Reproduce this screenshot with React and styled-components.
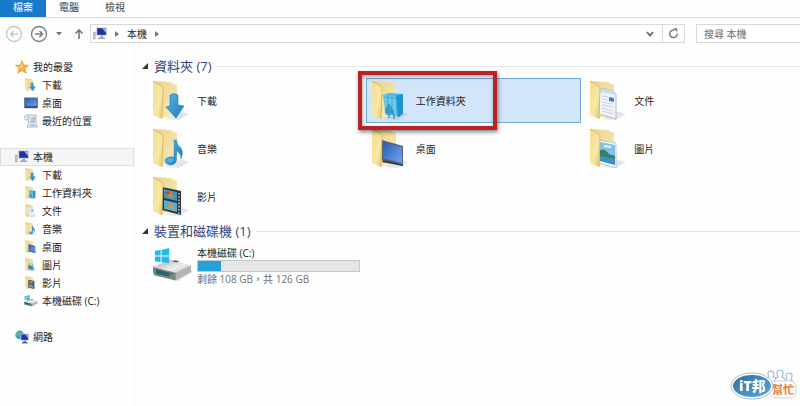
import React, { useState } from "react";
import styled, { createGlobalStyle } from "styled-components";

const places = [
  { id: "downloads", name: "下載" },
  { id: "work", name: "工作資料夾" },
  { id: "documents", name: "文件" },
  { id: "music", name: "音樂" },
  { id: "desktop", name: "桌面" },
  { id: "pictures", name: "圖片" },
  { id: "videos", name: "影片" },
];

function FolderContent({ kind }) {
  switch (kind) {
    case "downloads":
      return (
        <path
          d="M17 15 Q21 12 25 15 V25 L31 26 L23 38 L13 27 L17 26 Z"
          fill="url(#blueGlass)"
          stroke="#1a78b8"
          strokeWidth="0.6"
        />
      );
    case "work":
      return (
        <g>
          <path d="M11 15 L17 13 L31 14 L29 36 L14 35 Z" fill="#43b8e6" />
          <path d="M24 16 L31 14 V34 L26 37 Z" fill="#1e95cf" />
          <path d="M12 15 L24 16 V35 L13 33 Z" fill="#6cc9ec" />
          <path d="M13 29 L17 23 L22 31 V34 L13 33 Z" fill="#3a9cc9" />
          <path
            d="M12 17 L24 18 M16 16 V32 M20 16 V34 M27 16 V36 M29 16 V33 M24 22 L31 20 M24 28 L31 26"
            stroke="#2393c8"
            strokeWidth="0.6"
          />
          <path d="M17 33 V38 M22 34 V39 M27 35 V37" stroke="#1786bd" strokeWidth="1.1" />
        </g>
      );
    case "documents":
      return (
        <g>
          <path d="M9 8 L21 10 L26 14 V39 L9 34 Z" fill="#eef2fa" stroke="#9aa7b8" strokeWidth="0.7" />
          <path d="M9 8 L21 10 L26 15 L10 12 Z" fill="#c9daf1" />
          <path
            d="M12 16 L18 17 M12 19 L18 20 M12 22 L23 24 M12 25 L23 27 M12 28 L23 31 M12 31 L23 34"
            stroke="#c0c9da"
            strokeWidth="0.8"
          />
          <path d="M19 17 L24 18 V22 L19 21 Z" fill="#3f88b5" />
        </g>
      );
    case "music":
      return (
        <g>
          <path
            d="M21 12 H23.5 Q24 17 28 20 Q31 25 28 31 Q28 25 23.5 23 V32 Q23 37 17 37 Q12 36 12 32 Q14 28 21 29 Z"
            fill="url(#blueGlass)"
            stroke="#2a80b9"
            strokeWidth="0.4"
          />
          <ellipse cx="17" cy="32" rx="3.5" ry="2" fill="#64bced" opacity="0.6" />
        </g>
      );
    case "desktop":
      return (
        <g>
          <path d="M10 12 L31 18 V38 L10 32 Z" fill="#566474" />
          <path d="M11 14 L30 19 V35 L11 30 Z" fill="url(#screen)" />
          <path d="M11 32 L31 37 V38 L10 34 Z" fill="#253448" />
        </g>
      );
    case "pictures":
      return (
        <g>
          <path d="M9 12 L26 15 V40 L9 35 Z" fill="#f4f8fb" stroke="#a8b2bb" strokeWidth="0.7" />
          <path d="M10 14 L25 17 V37 L10 33 Z" fill="#82c0e8" />
          <path d="M10 22 Q15 20 19 26 L25 28 V31 L10 30 Z" fill="#387f66" />
          <path d="M10 28 L25 31 V37 L10 33 Z" fill="#3d90c4" />
          <path d="M14 18 L21 19" stroke="#e5f5fb" strokeWidth="2" />
        </g>
      );
    default:
      return (
        <g>
          <path d="M9 11 L28 15 V39 L9 34 Z" fill="#303234" />
          <path d="M11 13 L24 16 V25 L11 22 Z" fill="#3f97bf" />
          <path d="M11 24 L24 27 V36 L11 33 Z" fill="#5cacd1" />
          <path d="M14 19 L18 15 L21 22 L17 22 Z" fill="#d1813d" />
          <path d="M14 30 L19 27 L22 34 L17 32 Z" fill="#c99954" />
          <path d="M12 17 H17" stroke="#b34b48" strokeWidth="2" />
          <path d="M26 17 V38" stroke="#e8e8e8" strokeWidth="1.3" strokeDasharray="1.6 1.6" />
        </g>
      );
  }
}

function FolderIcon({ kind }) {
  return (
    <svg viewBox="0 0 36 42" aria-hidden="true">
      <path d="M12 39 L26 31 L36 34 L26 40 Z" fill="#8c929a" opacity="0.22" />
      <path d="M0 1 L17 2 L24 5 V35 L8 38 Z" fill="url(#folderBack)" />
      <FolderContent kind={kind} />
      <path d="M0 1 L10 7 L9 39 L0 35 Z" fill="url(#folderFront)" />
      <path d="M0 1 L10 7 L9 39" fill="none" stroke="#cfae57" strokeWidth="0.7" />
    </svg>
  );
}

function ComputerIcon() {
  return (
    <svg viewBox="0 0 14 14" aria-hidden="true">
      <path d="M0.5 5 H2.3 V12 H0.5 Z" fill="#c3c8d0" stroke="#7e8793" strokeWidth="0.4" />
      <path d="M3.4 0.5 H13.8 V8.6 H3.4 Z" fill="#bcc5dd" />
      <path d="M4.2 1.2 H13 V7.8 H4.2 Z" fill="#2032a0" />
      <path d="M9 1.2 H13 V6 Z" fill="#8fb8ee" />
      <path d="M7.5 8.6 H10 V10.6 H12 V12 H5 V10.6 H7.5 Z" fill="#9da6b8" />
    </svg>
  );
}

function StarIcon() {
  return (
    <svg viewBox="0 0 14 14" aria-hidden="true">
      <path
        d="M7 0.6 L8.8 5 L13.5 5.3 L9.9 8.4 L11.2 13.2 L7 10.6 L2.8 13.2 L4.1 8.4 L0.5 5.3 L5.2 5 Z"
        fill="#fbb03f"
        stroke="#e18a22"
        strokeWidth="0.6"
      />
      <path d="M7 2.5 L8 6 L5 8 L3 6 L6 6 Z" fill="#fedc87" />
    </svg>
  );
}

function ScreenIcon() {
  return (
    <svg viewBox="0 0 14 14" aria-hidden="true">
      <rect x="0.4" y="1.9" width="13.2" height="10" fill="#3c5f90" stroke="#67788e" strokeWidth="0.7" />
      <rect x="1.4" y="2.8" width="11.2" height="7.4" fill="url(#screen)" />
      <path d="M1 11 H13" stroke="#1b3760" />
    </svg>
  );
}

function RecentIcon() {
  return (
    <svg viewBox="0 0 14 14" aria-hidden="true">
      <path d="M4 1 H12 V10 L13.5 13 H3 L4.5 10 Z" fill="#e9eef3" stroke="#91a1b0" strokeWidth="0.7" />
      <path d="M7 4 H11 M7 6 H11 M6 8 H11 M6 11 H11" stroke="#7792ad" strokeWidth="0.9" />
      <circle cx="3" cy="3.4" r="2.6" fill="#f3f3f3" stroke="#9ea7b0" strokeWidth="0.7" />
      <path d="M3 2 V3.6 H4.4" fill="none" stroke="#77818b" strokeWidth="0.6" />
    </svg>
  );
}

function NetworkIcon() {
  return (
    <svg viewBox="0 0 14 14" aria-hidden="true">
      <circle cx="4.7" cy="5" r="4.4" fill="#4b9cc9" />
      <path d="M2 2 Q6 1 5 4 Q3 4 3 6 Q1 7 1 4 Z M6 6 L8 3 V8 Z" fill="#63ba78" />
      <rect x="5.6" y="3.7" width="8.2" height="7" fill="#cbd5ec" />
      <rect x="6.3" y="4.4" width="6.8" height="5.5" fill="#1f38ae" />
      <path d="M10 4.4 H13.1 V8 Z" fill="#85aae9" />
      <path d="M8.5 10.7 H11 V12 H12.5 V13.4 H7 V12 H8.5 Z" fill="#5c6b91" />
    </svg>
  );
}

function DriveIcon() {
  return (
    <svg viewBox="0 0 42 36" aria-hidden="true">
      <path d="M1 26 L26 35 L42 25 L34 20 Z" fill="#9a9a9a" opacity="0.3" />
      <path d="M0 20 L19 12 L40 18 L24 26 Z" fill="url(#metal)" />
      <path d="M0 20 L24 26 V34 L2 29 Q0 28 0 25 Z" fill="#7d858b" />
      <path d="M24 26 L40 18 V25 L24 34 Z" fill="#b2b3b4" />
      <path d="M3 22 L21 27 V31 L3 27 Z" fill="#286273" />
      <path d="M17 27 L22 28 V32 L17 31 Z" fill="#51a64d" />
      <ellipse cx="24" cy="14" rx="3" ry="1" fill="#555b60" />
      <path
        d="M2 3 L8 2 V8 H2 Z M9 2 L17 0 V8 H9 Z M2 9 H8 V15 L2 14 Z M9 9 H17 V16 L9 15 Z"
        fill="#23bce9"
      />
    </svg>
  );
}

function Gradients() {
  return (
    <Defs aria-hidden="true">
      <defs>
        <linearGradient id="folderBack" x2="1" y2="1">
          <stop offset="0" stopColor="#ead28a" />
          <stop offset="1" stopColor="#faedba" />
        </linearGradient>
        <linearGradient id="folderFront" y2="1">
          <stop offset="0" stopColor="#f3dd93" />
          <stop offset="0.6" stopColor="#f8e8a6" />
          <stop offset="1" stopColor="#e5c461" />
        </linearGradient>
        <linearGradient id="blueGlass" y2="1">
          <stop offset="0" stopColor="#5ab9e7" />
          <stop offset="1" stopColor="#1879bd" />
        </linearGradient>
        <linearGradient id="screen" x2="1" y2="1">
          <stop offset="0" stopColor="#285bbb" />
          <stop offset="1" stopColor="#71a6ed" />
        </linearGradient>
        <linearGradient id="metal" x2="1" y2="1">
          <stop offset="0" stopColor="#a4a7aa" />
          <stop offset="0.6" stopColor="#eeeeee" />
          <stop offset="1" stopColor="#b7b8b9" />
        </linearGradient>
        <linearGradient id="badge" y2="1">
          <stop offset="0" stopColor="#2c6da3" />
          <stop offset="1" stopColor="#62a8d5" />
        </linearGradient>
      </defs>
    </Defs>
  );
}

function Toolbar() {
  return (
    <Bar>
      <NavButtons>
        <IconButton aria-label="上一頁">
          <svg width="18" height="18" fill="none" stroke="#c6c6c6">
            <circle cx="9" cy="9" r="7.5" strokeWidth="1.3" />
            <path d="M13 9 H5.5 M8.5 6 L5.5 9 L8.5 12" strokeWidth="1.4" />
          </svg>
        </IconButton>
        <IconButton aria-label="下一頁">
          <svg width="18" height="18" fill="none" stroke="#808080">
            <circle cx="9" cy="9" r="7.5" strokeWidth="1.4" />
            <path d="M5 9 H12.5 M9.5 6 L12.5 9 L9.5 12" strokeWidth="1.7" />
          </svg>
        </IconButton>
        <IconButton aria-label="最近瀏覽">
          <svg width="8" height="4" fill="#777">
            <path d="M1 0 H7 L4 3.5 Z" />
          </svg>
        </IconButton>
        <IconButton aria-label="上移">
          <svg width="18" height="12" fill="none" stroke="#777" strokeWidth="1.6">
            <path d="M9 11 V2 M5.5 5.5 L9 2 L12.5 5.5" />
          </svg>
        </IconButton>
      </NavButtons>
      <Address>
        <SmallIcon>
          <ComputerIcon />
        </SmallIcon>
        <Crumb />
        <a href="#computer">本機</a>
        <Crumb />
        <Chevron aria-label="記錄">
          <svg width="8" height="6" fill="none" stroke="#666" strokeWidth="1.8">
            <path d="M1 1 L4 4.5 L7 1" />
          </svg>
        </Chevron>
        <Refresh aria-label="重新整理">
          <svg width="11" height="11" fill="none" stroke="#777" strokeWidth="1.4">
            <path d="M6.5 2.2 A3.8 3.8 0 1 0 9.3 5.6" />
            <path d="M5.4 0.2 H9.2 V4 Z" fill="#777" stroke="none" />
          </svg>
        </Refresh>
      </Address>
      <Search type="search" placeholder="搜尋 本機" aria-label="搜尋 本機" />
    </Bar>
  );
}

function Crumb() {
  return (
    <svg width="4" height="6" fill="#777" aria-hidden="true">
      <path d="M0 0 L4 3 L0 6 Z" />
    </svg>
  );
}

function Sidebar() {
  return (
    <Side aria-label="導覽窗格">
      <Tree>
        <Node href="#favorites">
          <SmallIcon><StarIcon /></SmallIcon>
          我的最愛
        </Node>
        <Node href="#downloads" $child>
          <SmallIcon><FolderIcon kind="downloads" /></SmallIcon>
          下載
        </Node>
        <Node href="#desktop" $child>
          <SmallIcon><ScreenIcon /></SmallIcon>
          桌面
        </Node>
        <Node href="#recent" $child>
          <SmallIcon><RecentIcon /></SmallIcon>
          最近的位置
        </Node>
      </Tree>
      <Tree>
        <Node href="#computer" $current aria-current="page">
          <SmallIcon><ComputerIcon /></SmallIcon>
          本機
        </Node>
        {places.map((place) => (
          <Node href={`#${place.id}`} key={place.id} $child>
            <SmallIcon><FolderIcon kind={place.id} /></SmallIcon>
            {place.name}
          </Node>
        ))}
        <Node href="#c" $child>
          <SmallIcon><DriveIcon /></SmallIcon>
          本機磁碟 (C:)
        </Node>
      </Tree>
      <Tree>
        <Node href="#network">
          <SmallIcon><NetworkIcon /></SmallIcon>
          網路
        </Node>
      </Tree>
    </Side>
  );
}

function Group({ title, children }) {
  const [open, setOpen] = useState(true);

  return (
    <section>
      <GroupTitle>
        <GroupToggle aria-expanded={open} onClick={() => setOpen(!open)}>
          <svg width="6" height="6" fill="#333" aria-hidden="true">
            <path d="M6 0 V6 H0 Z" />
          </svg>
          {title}
        </GroupToggle>
      </GroupTitle>
      {open && <Tiles>{children}</Tiles>}
    </section>
  );
}

function Watermark() {
  return (
    <Logo viewBox="0 0 70 40" role="img" aria-label="iT邦幫忙">
      <g fill="#fff" stroke="#8dbbdc" strokeWidth="1.1">
        <path d="M37 17 Q38 13 41 12 Q38 6 43 6 Q48 7 45 12 L49 13 M46 17 Q47 13 50 12 Q47 5 52 5 Q57 6 54 12 L57 14 M55 18 Q57 15 59 14 Q56 8 61 8 Q66 9 63 14 Q65 16 64 19" />
      </g>
      <rect x="42" y="16" width="26" height="17" rx="6" fill="#fff" stroke="#d0d0d0" />
      <ellipse cx="24" cy="21" rx="21" ry="13" fill="#fff" stroke="#a8bdcc" />
      <ellipse cx="24" cy="21" rx="19" ry="11" fill="url(#badge)" />
      <LogoText x="11" y="26" fontSize="14" fill="#fff">iT邦</LogoText>
      <LogoText x="44" y="29" fontSize="11" fill="#ec8440">幫忙</LogoText>
    </Logo>
  );
}

function App() {
  const [selected, setSelected] = useState("work");

  return (
    <Window>
      <GlobalStyle />
      <Gradients />
      <Tabs>
        <Tab $active>檔案</Tab>
        <Tab>電腦</Tab>
        <Tab>檢視</Tab>
      </Tabs>
      <Toolbar />
      <Body>
        <Sidebar />
        <Content>
          <Group title="資料夾 (7)">
            {places.map((place) => (
              <Tile
                key={place.id}
                $selected={selected === place.id}
                onClick={() => setSelected(place.id)}
              >
                <TileIcon>
                  <FolderIcon kind={place.id} />
                </TileIcon>
                {place.name}
                {place.id === "work" && <Highlight />}
              </Tile>
            ))}
          </Group>
          <Group title="裝置和磁碟機 (1)">
            <Tile $selected={selected === "c"} onClick={() => setSelected("c")}>
              <TileIcon $wide>
                <DriveIcon />
              </TileIcon>
              <DriveInfo>
                <span>本機磁碟 (C:)</span>
                <Usage value="18" max="126" aria-label="已使用空間" />
                <Free>剩餘 108 GB，共 126 GB</Free>
              </DriveInfo>
            </Tile>
          </Group>
        </Content>
      </Body>
      <Watermark />
    </Window>
  );
}

export default App;

const GlobalStyle = createGlobalStyle`
  * {
    box-sizing: border-box;
  }

  body {
    margin: 0;
    background: #fefefe;
  }

  body, button, input {
    font-family: "Open Sans", "Noto Sans CJK TC", sans-serif;
    font-size: 10px;
    line-height: 14px;
    color: #222;
  }

  button {
    border: 0;
    padding: 0;
    background: none;
  }

  a {
    color: inherit;
    text-decoration: none;
  }
`;

const Window = styled.div`
  min-height: 100vh;
  display: flex;
  flex-direction: column;
`;

const Defs = styled.svg`
  position: absolute;
  width: 0;
  height: 0;
`;

const Tabs = styled.nav`
  display: flex;
  border-bottom: 1px solid #dcdcdc;
`;

const Tab = styled.button`
  width: 46px;
  height: 17px;
  padding-bottom: 3px;
  background: ${(props) => (props.$active ? "#1979ca" : "transparent")};
  color: ${(props) => (props.$active ? "#fff" : "#444")};
`;

const Bar = styled.header`
  display: flex;
  align-items: center;
  padding-top: 6px;
`;

const NavButtons = styled.div`
  width: 90px;
  padding-left: 5px;
  display: flex;
  align-items: center;
  gap: 7px;
`;

const IconButton = styled.button`
  display: flex;
`;

const Address = styled.div`
  flex: 1;
  height: 19px;
  display: flex;
  align-items: center;
  gap: 8px;
  padding-left: 2px;
  border: 1px solid #d9d9d9;
`;

const SmallIcon = styled.span`
  flex: none;
  width: 14px;
  height: 14px;

  svg {
    display: block;
    width: 14px;
    height: 14px;
  }
`;

const Chevron = styled(IconButton)`
  margin-left: auto;
`;

const Refresh = styled.button`
  width: 22px;
  height: 100%;
  display: flex;
  align-items: center;
  justify-content: center;
  border-left: 1px solid #d9d9d9;
`;

const Search = styled.input`
  width: 13%;
  height: 19px;
  margin-left: 11px;
  padding: 0 7px;
  border: 1px solid #d9d9d9;
  border-right: 0;
  border-radius: 0;
  background: #fff;

  &::placeholder {
    color: #6d6d6d;
    opacity: 1;
  }
`;

const Body = styled.div`
  flex: 1;
  display: flex;
  padding-top: 6px;
`;

const Side = styled.nav`
  width: 135px;
  padding-top: 9px;
  display: flex;
  flex-direction: column;
  gap: 18px;
  border-right: 1px solid #f7f7f7;
`;

const Tree = styled.div`
  display: flex;
  flex-direction: column;
`;

const Node = styled.a`
  height: 18px;
  display: flex;
  align-items: center;
  gap: 4px;
  padding-left: ${(props) => (props.$child ? "24px" : "15px")};
  background: ${(props) => (props.$current ? "#f5f5f5" : "transparent")};
  box-shadow: ${(props) => (props.$current ? "inset 0 0 0 1px #dedede" : "none")};
`;

const Content = styled.main`
  flex: 1;
  min-width: 0;
  padding: 8px 0 0 7px;
`;

const GroupTitle = styled.h2`
  display: flex;
  align-items: center;
  gap: 6px;
  margin: 0 0 3px;
  font-weight: normal;

  &::after {
    content: "";
    flex: 1;
    border-top: 1px solid #e4e4e4;
  }
`;

const GroupToggle = styled.button`
  display: flex;
  align-items: center;
  gap: 6px;
  font-size: 13px;
  line-height: 18px;
  color: #34427f;
`;

const Tiles = styled.div`
  display: grid;
  grid-template-columns: repeat(auto-fill, minmax(200px, 1fr));
  gap: 3px;
  padding: 0 0 3px 5px;
`;

const Tile = styled.button`
  position: relative;
  height: 45px;
  display: flex;
  align-items: center;
  padding-left: 5px;
  text-align: left;
  border: 1px solid ${(props) => (props.$selected ? "#74a9dc" : "transparent")};
  background: ${(props) => (props.$selected ? "#d1e5fb" : "transparent")};
`;

const TileIcon = styled.span`
  flex: none;
  width: 44px;

  svg {
    display: block;
    width: ${(props) => (props.$wide ? "40px" : "36px")};
  }
`;

const Highlight = styled.span`
  position: absolute;
  z-index: 1;
  top: -8px;
  left: -9px;
  width: 139px;
  height: 59px;
  border: 4px solid #b92328;
  box-shadow: 1px 2px 4px rgba(0, 0, 0, 0.5), inset 1px 2px 4px rgba(0, 0, 0, 0.35);
  pointer-events: none;
`;

const DriveInfo = styled.span`
  flex: 1;
  display: flex;
  flex-direction: column;
`;

const Usage = styled.progress`
  appearance: none;
  display: block;
  width: 163px;
  height: 12px;
  border: 1px solid #c6c6c6;
  background: #e6e6e6;

  &::-webkit-progress-bar {
    background: #e6e6e6;
  }

  &::-webkit-progress-value {
    background: #26a0da;
  }
`;

const Free = styled.span`
  color: #707070;
`;

const Logo = styled.svg`
  position: fixed;
  right: 2px;
  bottom: 1px;
  width: 70px;
  height: 40px;
`;

const LogoText = styled.text`
  font-family: "Open Sans", "Noto Sans CJK TC", sans-serif;
  font-weight: 800;
`;
